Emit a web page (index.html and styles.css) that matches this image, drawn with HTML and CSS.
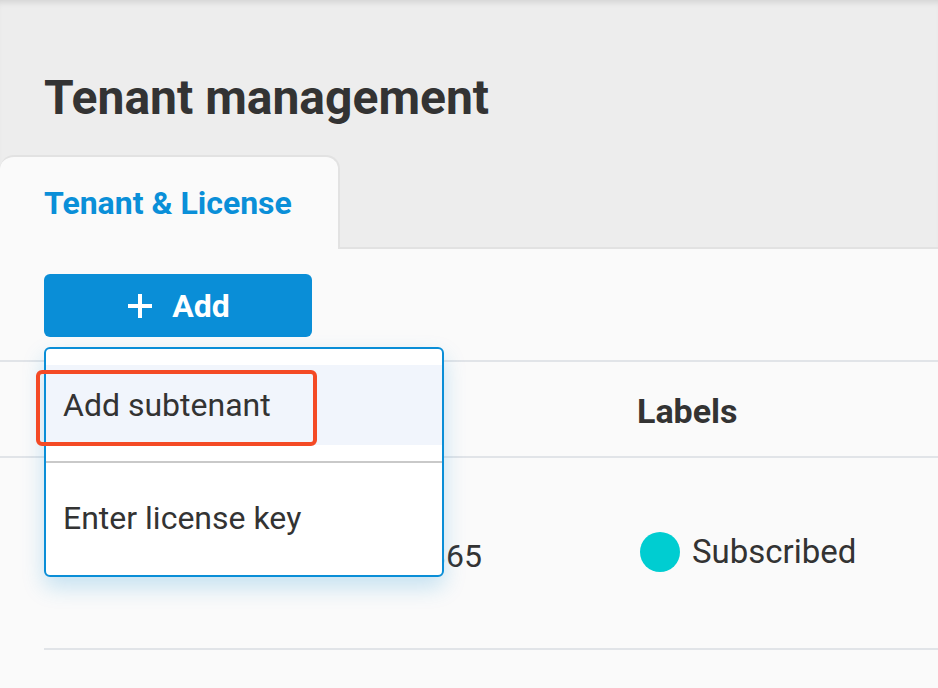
FILE: index.html
```html
<!DOCTYPE html>
<html>
<head>
<meta charset="utf-8">
<link rel="stylesheet" href="styles.css">
</head>
<body>
<header class="top">
  <h1 class="title">Tenant management</h1>
  <div class="tabs">
    <div class="tab active">Tenant &amp; License</div>
    <div class="tab-rest"></div>
  </div>
</header>
<main class="content">
  <div class="toolbar">
    <button class="btn-add">
      <svg class="plus" width="24" height="24" viewBox="0 0 24 24"><path d="M12 0v24M0 12h24" stroke="#fff" stroke-width="4"/></svg>
      <span>Add</span>
    </button>
  </div>
  <div class="table">
    <div class="row head">
      <div class="cell c1">Name</div>
      <div class="cell c2">Plan</div>
      <div class="cell c3">Labels</div>
    </div>
    <div class="row body">
      <div class="cell c1">Contoso</div>
      <div class="cell c2 num">Microsoft 365</div>
      <div class="cell c3"><span class="dot"></span>Subscribed</div>
    </div>
  </div>
  <div class="menu">
    <div class="item hover">Add subtenant</div>
    <div class="divider"></div>
    <div class="item second">Enter license key</div>
  </div>
  <div class="highlight"></div>
</main>
</body>
</html>
```
FILE: styles.css
```css
* { box-sizing: border-box; }
html, body { margin: 0; padding: 0; }
body {
  background: #fafafa;
  font-family: Roboto, "Liberation Sans", sans-serif;
  color: #333;
  width: 938px;
  height: 688px;
  overflow: hidden;
}
.top {
  background: #ededed;
  box-shadow: inset 0 6px 6px -4px rgba(0,0,0,0.12);
  padding-top: 70px;
}
.title {
  margin: 0 0 0 44px;
  font-size: 48px;
  font-weight: 700;
  line-height: 56px;
  color: #333;
}
.tabs {
  display: flex;
  margin-top: 29px;
}
.tab {
  width: 340px;
  height: 94px;
  background: #fafafa;
  border: 2px solid #e2e2e2;
  border-bottom: none;
  border-left: none;
  border-radius: 14px 14px 0 0;
  padding: 26px 0 0 44px;
  font-size: 32px;
  font-weight: 700;
  color: #0a8fd8;
  line-height: 40px;
}
.tab-rest {
  flex: 1;
  border-bottom: 2px solid #e2e2e2;
}
.content {
  position: relative;
}
.toolbar {
  padding: 25px 0 0 44px;
  height: 111px;
}
.btn-add {
  width: 268px;
  height: 63px;
  background: #0a8ed7;
  border: none;
  border-radius: 6px;
  color: #fff;
  font-family: Roboto, "Liberation Sans", sans-serif;
  font-size: 32px;
  font-weight: 700;
  display: flex;
  align-items: center;
  justify-content: center;
  gap: 20px;
  padding: 0 0 0 2px;
}
.plus { display: block; }
.table {
  border-top: 2px solid #e1e4e8;
}
.row {
  display: grid;
  grid-template-columns: 200px 392px 1fr;
  margin-left: 44px;
  align-items: center;
}
.row.head {
  height: 96px;
  border-bottom: 2px solid #e1e4e8;
  margin-left: 0;
  padding-left: 44px;
}
.row.body {
  height: 192px;
  border-bottom: 2px solid #e1e4e8;
  padding-bottom: 2px;
}
.cell {
  font-size: 32px;
  line-height: 38px;
  white-space: nowrap;
}
.head .cell { font-weight: 700; padding-top: 4px; font-size: 34px; }
.num {
  text-align: right;
  padding-right: 154px;
  padding-top: 8px;
}
.c3 { display: flex; align-items: center; padding-left: 1px; }
.body .c3 { padding-left: 4px; font-size: 33px; }
.dot {
  width: 40px;
  height: 40px;
  border-radius: 50%;
  background: #00cdd1;
  margin-right: 12px;
  flex: none;
}
.menu {
  position: absolute;
  left: 44px;
  top: 98px;
  width: 400px;
  height: 230px;
  background: #fff;
  border: 2px solid #0a8ed7;
  border-radius: 6px;
  box-shadow: 0 10px 22px rgba(10,142,215,0.22);
  padding-top: 16px;
}
.item {
  font-size: 32px;
  padding-left: 17px;
  display: flex;
  align-items: center;
}
.item.hover {
  height: 80px;
  background: #f1f5fc;
}
.divider {
  height: 2px;
  background: #c9c9c9;
  margin-top: 16px;
}
.item.second {
  height: 110px;
}
.highlight {
  position: absolute;
  left: 36px;
  top: 121px;
  width: 281px;
  height: 76px;
  border: 4px solid #f44a25;
  border-radius: 6px;
}
```
